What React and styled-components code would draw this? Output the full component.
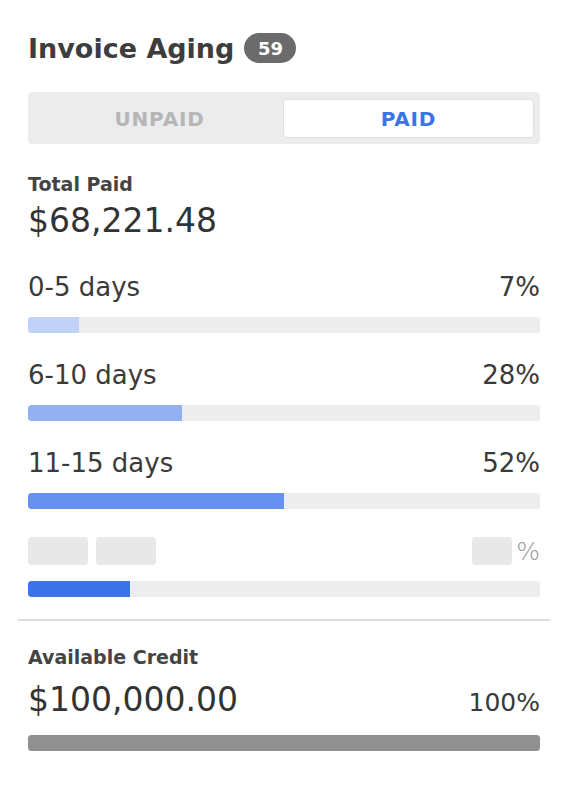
import React from "react";
import styled, { createGlobalStyle } from "styled-components";

const Global = createGlobalStyle`
  html, body { margin: 0; padding: 0; background: #fff; }
  body { font-family: "DejaVu Sans", "Open Sans", sans-serif; color: #333; }
`;

const Card = styled.div`
  width: 568px;
  box-sizing: border-box;
  padding: 30px 0 40px;
`;

const Section = styled.div`
  padding: 0 28px;
`;

const Header = styled.div`
  display: flex;
  align-items: center;
  gap: 10px;
  height: 36px;
`;

const Title = styled.h2`
  margin: 0;
  font-size: 27px;
  font-weight: 700;
  color: #3d3d3d;
`;

const Badge = styled.span`
  display: inline-flex;
  align-items: center;
  justify-content: center;
  height: 30px;
  min-width: 52px;
  border-radius: 15px;
  background: #6b6b6b;
  color: #fff;
  font-size: 18px;
  font-weight: 700;
`;

const Tabs = styled.div`
  margin-top: 26px;
  display: grid;
  grid-template-columns: 1fr 1fr;
  background: #ececec;
  border-radius: 4px;
  padding: 8px 7px 7px 7px;
  height: 52px;
  box-sizing: border-box;
`;

const Tab = styled.div`
  display: flex;
  align-items: center;
  justify-content: center;
  font-size: 20px;
  font-weight: 700;
  letter-spacing: 0.8px;
  border-radius: 3px;
  color: ${(p) => (p.$active ? "#3b74e8" : "#b6b6b6")};
  background: ${(p) => (p.$active ? "#fff" : "transparent")};
  box-shadow: ${(p) => (p.$active ? "0 0 2px rgba(0,0,0,0.18)" : "none")};
`;

const Label = styled.div`
  margin-top: ${(p) => p.$mt || 0}px;
  font-size: 19px;
  font-weight: 700;
  color: #444;
  line-height: 22px;
`;

const Amount = styled.div`
  font-size: 33px;
  font-weight: 400;
  color: #333;
  line-height: 40px;
  margin-top: 6px;
`;

const Row = styled.div`
  display: flex;
  justify-content: space-between;
  align-items: center;
  margin-top: ${(p) => p.$mt}px;
  height: 32px;
  font-size: 26px;
  font-weight: 400;
  color: #3a3a3a;
`;

const Track = styled.div`
  margin-top: ${(p) => p.$mt || 14}px;
  height: 16px;
  border-radius: 3px;
  background: #ededed;
  overflow: hidden;
`;

const Fill = styled.div`
  height: 100%;
  background: ${(p) => p.$color};
  border-radius: 3px 0 0 3px;
`;

const SkelGroup = styled.div`
  display: flex;
  align-items: center;
  gap: 8px;
`;

const Skel = styled.div`
  width: ${(p) => p.$w}px;
  height: 28px;
  border-radius: 4px;
  background: #e8e8e8;
`;

const Pct = styled.span`
  color: #999;
  font-size: 25px;
  font-weight: 300;
  margin-left: -4px;
`;

const Divider = styled.hr`
  margin: 22px 18px 0;
  border: 0;
  border-top: 2px solid #dedede;
`;

const CreditRow = styled.div`
  display: flex;
  justify-content: space-between;
  align-items: baseline;
  margin-top: 6px;
`;

const CreditPct = styled.span`
  font-size: 25px;
  color: #3a3a3a;
`;

const rows = [
  { label: "0-5 days", pct: "7%", w: 10, color: "#c0d2f8" },
  { label: "6-10 days", pct: "28%", w: 30, color: "#93b1f2" },
  { label: "11-15 days", pct: "52%", w: 50, color: "#6592ee" },
];

export default function App() {
  return (
    <>
      <Global />
      <Card>
        <Section>
          <Header>
            <Title>Invoice Aging</Title>
            <Badge>59</Badge>
          </Header>
          <Tabs>
            <Tab>UNPAID</Tab>
            <Tab $active>PAID</Tab>
          </Tabs>
          <Label $mt={29}>Total Paid</Label>
          <Amount>$68,221.48</Amount>
          {rows.map((r, i) => (
            <React.Fragment key={r.label}>
              <Row $mt={i === 0 ? 30 : 26}>
                <span>{r.label}</span>
                <span>{r.pct}</span>
              </Row>
              <Track>
                <Fill $color={r.color} style={{ width: `${r.w}%` }} />
              </Track>
            </React.Fragment>
          ))}
          <Row $mt={26}>
            <SkelGroup>
              <Skel $w={60} />
              <Skel $w={60} />
            </SkelGroup>
            <SkelGroup>
              <Skel $w={40} />
              <Pct>%</Pct>
            </SkelGroup>
          </Row>
          <Track $mt={14}>
            <Fill $color="#3b74e8" style={{ width: "20%" }} />
          </Track>
        </Section>
        <Divider />
        <Section>
          <Label $mt={25}>Available Credit</Label>
          <CreditRow>
            <Amount>$100,000.00</Amount>
            <CreditPct>100%</CreditPct>
          </CreditRow>
          <Track $mt={15}>
            <Fill $color="#909090" style={{ width: "100%", borderRadius: 3 }} />
          </Track>
        </Section>
      </Card>
    </>
  );
}
